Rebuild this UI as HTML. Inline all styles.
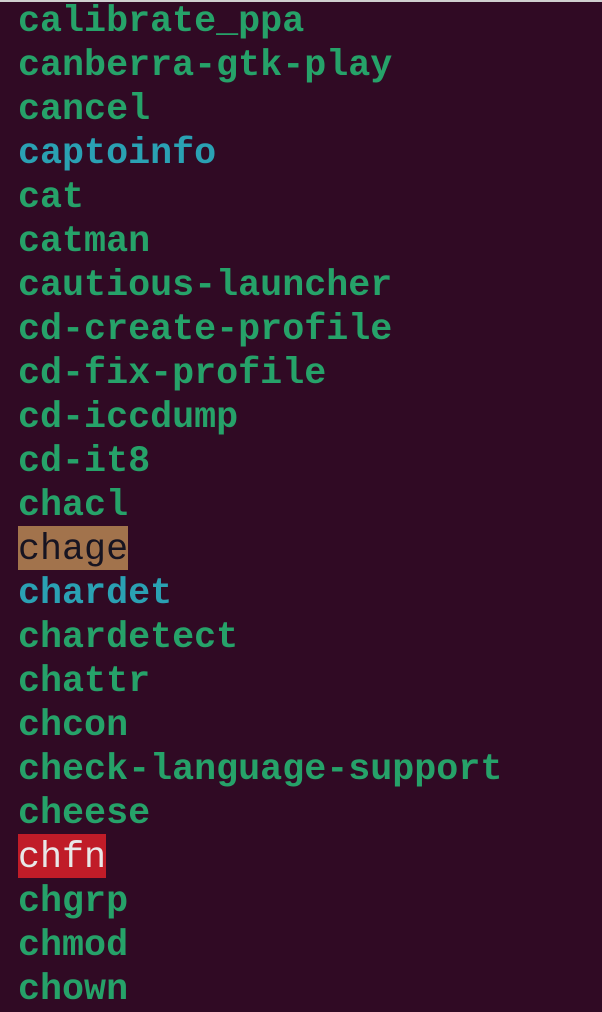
<!DOCTYPE html><html><head><style>
body{margin:0;width:602px;height:976px;overflow:hidden;background:#300a24;border-top:2px solid #cfcfcf;box-sizing:border-box}
.t{position:absolute;top:0px;left:18px;font-family:"Liberation Mono",monospace;font-weight:bold;font-size:36.7px;line-height:44px;color:#26a269;white-space:pre}
.b{color:#2aa1b3}.o{background:linear-gradient(#a2734c,#a2734c) 0 0/100% 42px no-repeat;box-shadow:0 -2px 0 #a2734c;color:#171421;font-weight:normal}.r{background:linear-gradient(#c01c28,#c01c28) 0 0/100% 42px no-repeat;box-shadow:0 -2px 0 #c01c28;color:#e8e8e8;font-weight:normal}
span{display:inline-block;height:44px}
</style></head><body><div class="t">calibrate_ppa
canberra-gtk-play
cancel
<span class="b">captoinfo</span>
cat
catman
cautious-launcher
cd-create-profile
cd-fix-profile
cd-iccdump
cd-it8
chacl
<span class="o">chage</span>
<span class="b">chardet</span>
chardetect
chattr
chcon
check-language-support
cheese
<span class="r">chfn</span>
chgrp
chmod
chown</div></body></html>
